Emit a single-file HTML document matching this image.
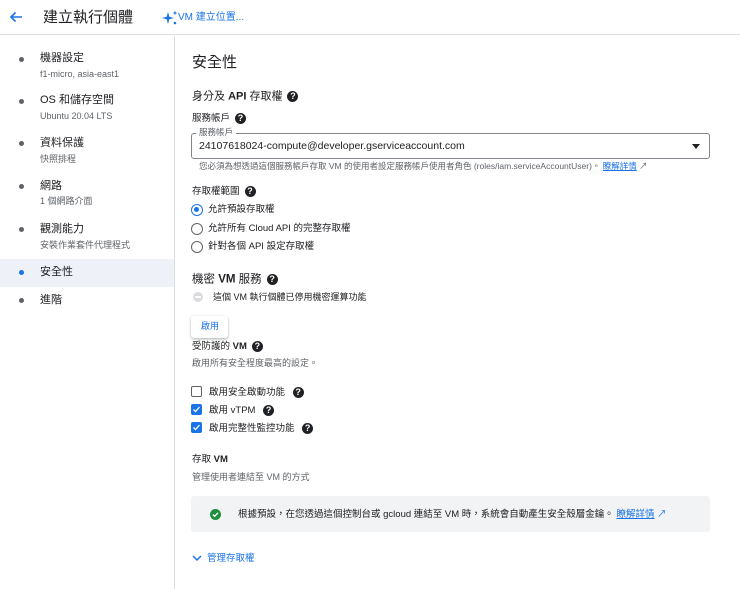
<!DOCTYPE html>
<html><head><meta charset="utf-8"><style>
*{margin:0;padding:0;box-sizing:border-box}
body{width:740px;height:589px;overflow:hidden;background:#fff;font-family:"Liberation Sans","Noto Sans CJK TC",sans-serif;color:#202124;position:relative}
.a{position:absolute;white-space:nowrap;line-height:1}
.g{color:#5f6368}
.q{display:inline-block;width:11px;height:11px;border-radius:50%;background:#202124;color:#fff;font-size:9px;font-weight:bold;text-align:center;line-height:11px;vertical-align:middle;margin-left:5px}
.dot{position:absolute;left:19px;width:5px;height:5px;border-radius:50%;background:#5f6368}
.rad{position:absolute;left:191px;width:12px;height:12px;border:1.5px solid #5f6368;border-radius:50%}
.cb{position:absolute;left:191px;width:11px;height:11px;border:1.5px solid #5f6368;border-radius:2px}
.cb.on{background:#1a73e8;border-color:#1a73e8}
a,.lk{color:#1a73e8;text-decoration:underline}
</style></head><body>
<div style="position:absolute;left:0;top:0;width:740px;height:35px;border-bottom:1px solid #dadce0"></div>
<svg class="a" style="left:9px;top:11px" width="14" height="12" viewBox="0 0 14 12"><path d="M13 6H2M6.5 1.5L2 6l4.5 4.5" stroke="#1a73e8" stroke-width="1.6" fill="none"/></svg>
<div class="a" style="left:43px;top:10px;font-size:15px">建立執行個體</div>
<svg class="a" style="left:162px;top:10px" width="16" height="16" viewBox="0 0 16 16"><path d="M6 2L7.3 6.7 12 8 7.3 9.3 6 14 4.7 9.3 0 8 4.7 6.7Z" fill="#1a73e8"/><path d="M13 0.5l.6 1.9 1.9.6-1.9.6-.6 1.9-.6-1.9-1.9-.6 1.9-.6Z" fill="#1a73e8"/><circle cx="13" cy="13" r="1.3" fill="#1a73e8"/></svg>
<div class="a" style="left:178px;top:13px;font-size:10px;color:#1a73e8">VM 建立位置...</div>
<div style="position:absolute;left:174px;top:36px;width:1px;height:553px;background:#dadce0"></div>
<div style="position:absolute;left:0;top:259px;width:174px;height:28px;background:#eef2f8"></div>
<div class="dot" style="top:57px"></div><div class="a" style="left:40px;top:53px;font-size:11px">機器設定</div><div class="a g" style="left:40px;top:70px;font-size:9px">f1-micro, asia-east1</div>
<div class="dot" style="top:99px"></div><div class="a" style="left:40px;top:95px;font-size:11px">OS 和儲存空間</div><div class="a g" style="left:40px;top:112px;font-size:9px">Ubuntu 20.04 LTS</div>
<div class="dot" style="top:141px"></div><div class="a" style="left:40px;top:138px;font-size:11px">資料保護</div><div class="a g" style="left:40px;top:155px;font-size:9px">快照排程</div>
<div class="dot" style="top:184px"></div><div class="a" style="left:40px;top:181px;font-size:11px">網路</div><div class="a g" style="left:40px;top:197px;font-size:9px">1 個網路介面</div>
<div class="dot" style="top:227px"></div><div class="a" style="left:40px;top:224px;font-size:11px">觀測能力</div><div class="a g" style="left:40px;top:241px;font-size:9px">安裝作業套件代理程式</div>
<div class="dot" style="top:270px;background:#1a73e8"></div><div class="a" style="left:40px;top:267px;font-size:11px">安全性</div>
<div class="dot" style="top:298px"></div><div class="a" style="left:40px;top:295px;font-size:11px">進階</div>

<div class="a" style="left:192px;top:55px;font-size:15px">安全性</div>
<div class="a" style="left:192px;top:91px;font-size:11px">身分及 <b>API</b> 存取權<span class="q">?</span></div>
<div class="a" style="left:192px;top:113px;font-size:9.5px">服務帳戶<span class="q">?</span></div>
<div style="position:absolute;left:191px;top:133px;width:519px;height:26px;border:1px solid #80868b;border-radius:3px"></div>
<div class="a g" style="left:196px;top:128px;font-size:8.5px;background:#fff;padding:0 3px">服務帳戶</div>
<div class="a" style="left:199px;top:141px;font-size:10.5px">24107618024-compute@developer.gserviceaccount.com</div>
<div class="a" style="left:692px;top:144px;width:0;height:0;border-left:4px solid transparent;border-right:4px solid transparent;border-top:5px solid #202124"></div>
<div class="a g" style="left:199px;top:162px;font-size:8.5px">您必須為想透過這個服務帳戶存取 VM 的使用者設定服務帳戶使用者角色 (roles/iam.serviceAccountUser)。 <span class="lk">瞭解詳情</span> ↗</div>
<div class="a" style="left:192px;top:186px;font-size:9.5px">存取權範圍<span class="q">?</span></div>
<div class="rad" style="top:204px;border-color:#1a73e8"><div style="margin:2px;width:5px;height:5px;border-radius:50%;background:#1a73e8"></div></div><div class="a" style="left:208px;top:205px;font-size:9.5px">允許預設存取權</div>
<div class="rad" style="top:223px"></div><div class="a" style="left:208px;top:224px;font-size:9.5px">允許所有 Cloud API 的完整存取權</div>
<div class="rad" style="top:241px"></div><div class="a" style="left:208px;top:242px;font-size:9.5px">針對各個 API 設定存取權</div>
<div class="a" style="left:192px;top:274px;font-size:11.5px">機密 <b>VM</b> 服務<span class="q">?</span></div>
<div class="a" style="left:193px;top:292px;width:10px;height:10px;border-radius:50%;background:#dadce0"><div style="margin:4px 2px;height:2px;background:#fff"></div></div>
<div class="a" style="left:213px;top:293px;font-size:9px">這個 VM 執行個體已停用機密運算功能</div>
<div style="position:absolute;left:191px;top:316px;width:37px;height:22px;border-radius:3px;box-shadow:0 1px 2px rgba(60,64,67,.3),0 1px 3px rgba(60,64,67,.15)"></div>
<div class="a" style="left:201px;top:322px;font-size:9px;color:#1a73e8">啟用</div>
<div class="a" style="left:192px;top:341px;font-size:9.5px">受防護的 <b>VM</b><span class="q">?</span></div>
<div class="a g" style="left:192px;top:359px;font-size:9px">啟用所有安全程度最高的設定。</div>
<div class="cb" style="top:386px"></div><div class="a" style="left:209px;top:387px;font-size:9.5px">啟用安全啟動功能 <span class="q">?</span></div>
<div class="cb on" style="top:404px"><svg width="9" height="9" viewBox="0 0 9 9" style="display:block"><path d="M1.5 4.5l2 2 4-4.5" stroke="#fff" stroke-width="1.3" fill="none"/></svg></div><div class="a" style="left:209px;top:405px;font-size:9.5px">啟用 vTPM <span class="q">?</span></div>
<div class="cb on" style="top:422px"><svg width="9" height="9" viewBox="0 0 9 9" style="display:block"><path d="M1.5 4.5l2 2 4-4.5" stroke="#fff" stroke-width="1.3" fill="none"/></svg></div><div class="a" style="left:209px;top:423px;font-size:9.5px">啟用完整性監控功能 <span class="q">?</span></div>
<div class="a" style="left:192px;top:455px;font-size:9.5px">存取 <b>VM</b></div>
<div class="a g" style="left:192px;top:473px;font-size:9px">管理使用者連結至 VM 的方式</div>
<div style="position:absolute;left:191px;top:496px;width:519px;height:36px;background:#f1f3f4;border-radius:3px"></div>
<div class="a" style="left:210px;top:509px;width:11px;height:11px;border-radius:50%;background:#1e8e3e"><svg width="11" height="11" viewBox="0 0 11 11" style="display:block"><path d="M3 5.6l1.7 1.7 3.3-3.5" stroke="#fff" stroke-width="1.4" fill="none"/></svg></div>
<div class="a" style="left:238px;top:510px;font-size:9.5px">根據預設，在您透過這個控制台或 gcloud 連結至 VM 時，系統會自動產生安全殼層金鑰。 <span class="lk">瞭解詳情</span> <span style="color:#1a73e8">↗</span></div>
<svg class="a" style="left:192px;top:555px" width="10" height="7" viewBox="0 0 10 7"><path d="M1 1l4 4 4-4" stroke="#1a73e8" stroke-width="1.5" fill="none"/></svg>
<div class="a" style="left:207px;top:554px;font-size:9.5px;color:#1a73e8">管理存取權</div>
</body></html>
